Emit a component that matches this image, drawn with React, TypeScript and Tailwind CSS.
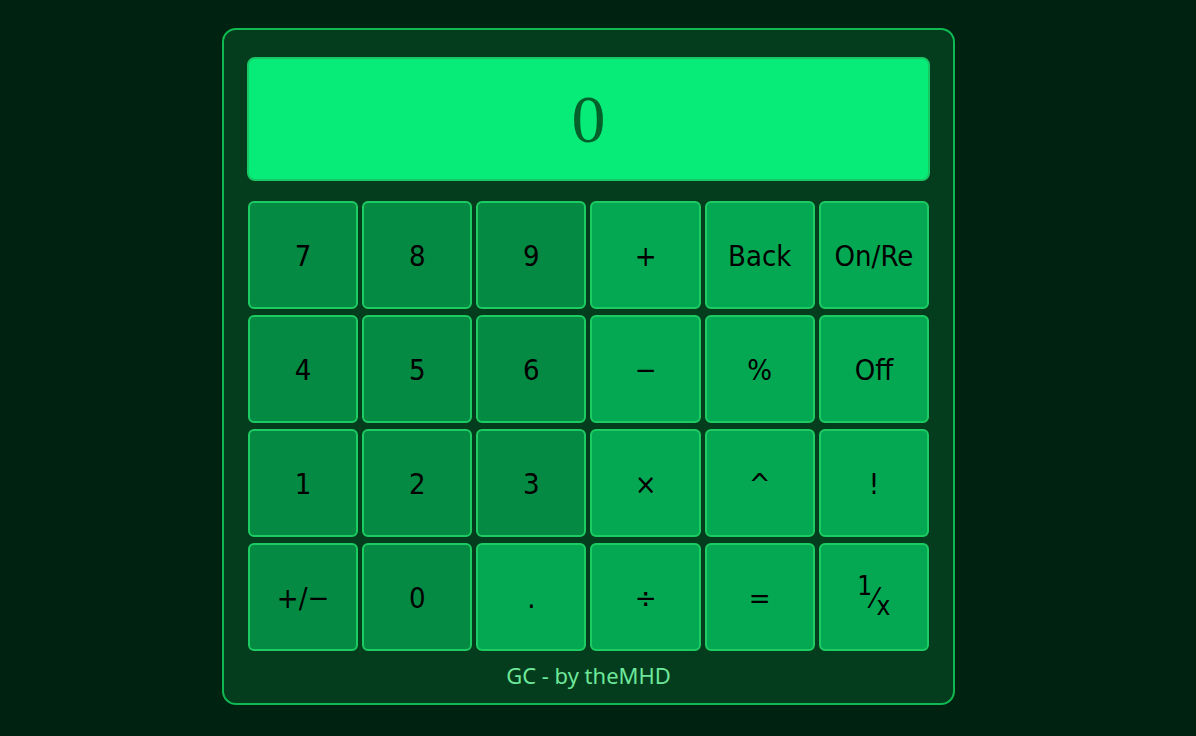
import React from "react";

type Btn = { label: React.ReactNode; num?: boolean };

const rows: Btn[][] = [
  [{ label: "7", num: true }, { label: "8", num: true }, { label: "9", num: true }, { label: "+" }, { label: "Back" }, { label: "On/Re" }],
  [{ label: "4", num: true }, { label: "5", num: true }, { label: "6", num: true }, { label: "\u2212" }, { label: "%" }, { label: "Off" }],
  [{ label: "1", num: true }, { label: "2", num: true }, { label: "3", num: true }, { label: "\u00d7" }, { label: "^" }, { label: "!" }],
  [
    { label: "+/\u2212", num: true },
    { label: "0", num: true },
    { label: "." },
    { label: "\u00f7" },
    { label: "=" },
    {
      label: (
        <span>
          <sup className="text-[26px]">1</sup>
          <span>&frasl;</span>
          <sub className="text-[26px]">x</sub>
        </span>
      ),
    },
  ],
];

export default function App() {
  return (
    <div className="w-[1196px] h-[736px] bg-[#002211] flex pl-[222px] pt-[28px]" style={{ fontFamily: '"DejaVu Sans Condensed", "Noto Sans", sans-serif' }}>
      <div className="w-[733px] h-[677px] bg-[#033d1d] border-2 border-[#0fb851] rounded-[14px] pt-[27px] px-[23px] flex flex-col">
        <div className="h-[124px] bg-[#07ec78] border-2 border-[#19c865] rounded-[8px] flex items-center justify-center">
          <span className="text-[68px] leading-none text-[#03602b]" style={{ fontFamily: '"Liberation Serif", serif' }}>0</span>
        </div>
        <div className="mt-[20px] px-[1px] grid grid-cols-6 gap-x-[4px] gap-y-[6px]">
          {rows.flat().map((b, i) => (
            <div
              key={i}
              className={`h-[108px] pt-[4px] rounded-[6px] border-2 border-[#1ccc63] flex items-center justify-center text-[29px] text-black ${b.num ? "bg-[#048a42]" : "bg-[#05a852]"}`}
            >
              {b.label}
            </div>
          ))}
        </div>
        <div className="mt-[10px] text-center text-[22px] leading-[28px] text-[#6ee79a]" style={{ fontFamily: '"Noto Sans", sans-serif' }}>GC - by theMHD</div>
      </div>
    </div>
  );
}
